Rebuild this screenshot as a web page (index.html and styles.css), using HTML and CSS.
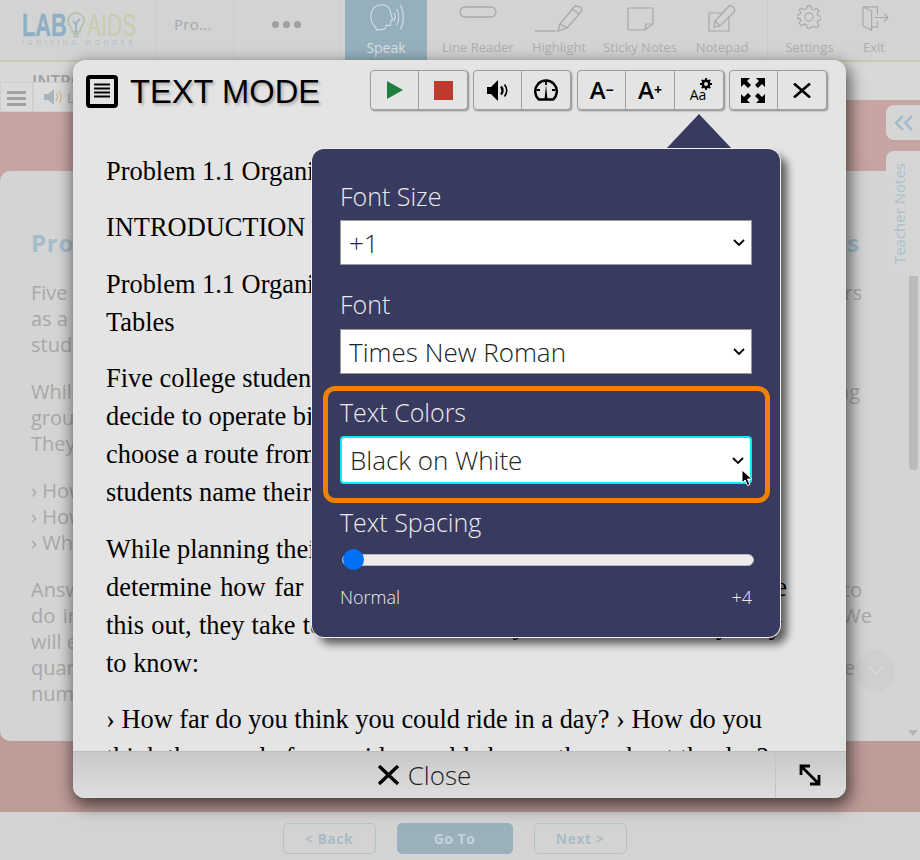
FILE: index.html
```html
<!DOCTYPE html>
<html lang="en">
<head>
<meta charset="utf-8">
<title>Text Mode</title>
<link rel="stylesheet" href="styles.css">
</head>
<body>
<div class="page">
  <header class="topbar">
    <div class="logo">
      <div class="logo-main"><span class="logo-lab">LAB</span>
        <svg class="logo-bulb" viewBox="0 0 18 28" width="18" height="28" fill="none"><path d="M9 1a8 8 0 0 0-8 8c0 4 3 5 4 9v2h8v-2c1-4 4-5 4-9a8 8 0 0 0-8-8z" stroke="#aebfa6" stroke-width="1.400"/><path d="M9 20V11l4-4M9 13L6 9" stroke="#9db7c6" stroke-width="2"/><path d="M6 22h6M6.500 24.500h5" stroke="#a9b9a4" stroke-width="1.500"/></svg>
        <span class="logo-aids">AIDS</span></div>
      <div class="logo-sub">IGNITING WONDER</div>
    </div>
    <div class="crumb">Pro...</div>
    <div class="dots"><i></i><i></i><i></i></div>
    <div class="tool tool-active">
      <svg viewBox="0 0 36 30" width="36" height="29" fill="none" stroke="#d5dfe3" stroke-width="1.100"><path d="M5 22C0 14 2 2 12 1c7-1 11 4 11 9 0 2 2 5 2 6l-2 1 0 4c0 2-3 1-5 1l-1 4-9 1c0-3-1-4-3-5z"/><path d="M26 9c2 3 2 6 0 9M29 5c3 5 3 12 0 17M33 1c4 8 4 18 0 25"/></svg>
      <span>Speak</span>
    </div>
    <div class="tool tool-line">
      <svg viewBox="0 0 38 12" width="38" height="12" fill="none" stroke="#a8a8a8" stroke-width="1.300"><rect x="1" y="1" width="36" height="10" rx="5"/></svg>
      <span>Line Reader</span>
    </div>
    <div class="tool tool-hl">
      <svg viewBox="0 0 48 27" width="48" height="27" fill="none" stroke="#a8a8a8" stroke-width="1.300"><path d="M0 26h21"/><path d="M23 26l2-7L39 2c2-2 4-1 6 0s2 3 1 5L32 23z"/><path d="M25 19l7 4M37 4l7 5"/></svg>
      <span>Highlight</span>
    </div>
    <div class="tool tool-sticky">
      <svg viewBox="0 0 27 24" width="27" height="24" fill="none" stroke="#a8a8a8" stroke-width="1.200"><path d="M1 1h25v16l-8 6H1z"/><path d="M18 23l1-6h7"/></svg>
      <span>Sticky Notes</span>
    </div>
    <div class="tool tool-note">
      <svg viewBox="0 0 28 27" width="28" height="27" fill="none" stroke="#a8a8a8" stroke-width="1.200"><path d="M21 11v15H1V8h15"/><path d="M6 22l1-6L21 1c1-1 3 0 5 2 1 2 1 3 0 4L12 21z"/><path d="M7 16l5 5"/></svg>
      <span>Notepad</span>
    </div>
    <div class="tool tool-set">
      <svg viewBox="0 0 26 26" width="24" height="24" fill="none" stroke="#a8a8a8" stroke-width="1.200"><circle cx="13" cy="13" r="4.500"/><path d="M11 1h4l.7 3.500 2.300 1 3-2 2.800 2.800-2 3 1 2.300 3.200.6v4l-3.200.7-1 2.300 2 3-2.800 2.800-3-2-2.300 1L15 25h-4l-.7-3.500-2.300-1-3 2L2.200 19.700l2-3-1-2.300L0 15v-4l3.200-.6 1-2.300-2-3L5 3.300l3 2 2.300-1z"/></svg>
      <span>Settings</span>
    </div>
    <div class="tool tool-exit">
      <svg viewBox="0 0 28 27" width="27" height="26" fill="none" stroke="#a8a8a8" stroke-width="1.200"><path d="M1 2v20l9 4V6L1 2h15v8M16 17v6h-6"/><path d="M13 13h14M23 9l4 4-4 4"/></svg>
      <span>Exit</span>
    </div>
  </header>
  <div class="greenline"></div>
  <div class="strip">
    <div class="strip-title">INTRODUCTION</div>
    <div class="mini-bar">
      <div class="mini-btn mini-menu"><i></i><i></i><i></i></div>
      <div class="mini-btn mini-listen">
        <svg viewBox="0 0 20 18" width="20" height="18"><path d="M1 6h4l6-5v16l-6-5H1z" fill="#aab4bc"/><path d="M13 5c2 2 2 6 0 8M16 3c3 3 3 9 0 12" stroke="#cdb68a" stroke-width="1.200" fill="none"/></svg>
        <span>Listen</span>
      </div>
    </div>
  </div>
  <main class="stage">
    <div class="side-tab side-collapse">
      <svg viewBox="0 0 20 16" width="20" height="16" fill="none" stroke="#a3bccb" stroke-width="2.500"><path d="M9 1L2 8l7 7M18 1l-7 7 7 7"/></svg>
    </div>
    <div class="side-tab side-notes"><span>Teacher Notes</span></div>
    <section class="card">
      <h1 class="card-title">Problem 1.1 Organizing Data in Tables</h1>
      <p class="bg-line e862">Five college students plan a summer biking trip and act as tour operators</p>
      <p class="bg-line">as a business. A bike shop lends them equipment for the long ride</p>
      <p class="bg-line">students will ride, and they make a plan.</p>
      <p class="bg-line bg-gap e860">While planning a trip, students ask how far they can ride in training</p>
      <p class="bg-line">group trials and long rides. They take notes on what they need.</p>
      <p class="bg-line">They collect their data.</p>
      <p class="bg-line bg-gap">› How far do you think you could ride in a day?</p>
      <p class="bg-line">› How do you think the speed of your ride would change?</p>
      <p class="bg-line">› What conditions would affect the distance you could ride?</p>
      <p class="bg-line bg-gap e862">Answer these questions by collecting data. In this unit, you learn how to</p>
      <p class="bg-line e872">do in a table and on a graph how one quantity changes with another one here too. We</p>
      <p class="bg-line">will explore how changes in one variable affect the other.</p>
      <p class="bg-line e855">quantities and how you can use patterns to describe a change over time</p>
      <p class="bg-line">numbers.</p>
      <div class="round-down"><svg viewBox="0 0 16 10" width="16" height="10" fill="none" stroke="#dadada" stroke-width="1.500"><path d="M1 1l7 7 7-7"/></svg></div>
    </section>
    <div class="scroller"></div>
    <svg class="scroll-down" viewBox="0 0 10 6" width="10" height="6"><path d="M0 0h10L5 6z" fill="#b4b4b4"/></svg>
  </main>
  <footer class="pager">
    <button class="pg-btn" type="button">&lt; Back</button>
    <button class="pg-btn pg-go" type="button">Go To</button>
    <button class="pg-btn" type="button">Next &gt;</button>
  </footer>
</div>

<div class="modal">
  <div class="modal-head">
    <svg class="doc-icon" viewBox="0 0 32 33" width="32" height="33" fill="none" stroke="#000"><rect x="2" y="2" width="28" height="29" rx="2" stroke-width="4"/><path d="M8 9.500h16M8 13.500h16M8 17.500h16M8 21.500h16" stroke-width="1.800"/></svg>
    <h2 class="modal-title">TEXT MODE</h2>
    <div class="btns">
      <div class="grp">
        <button class="b" type="button"><svg viewBox="0 0 16 18" width="16" height="18"><path d="M0 0l16 9-16 9z" fill="#1f7f3f"/></svg></button>
        <button class="b" type="button"><svg viewBox="0 0 19 19" width="19" height="19"><rect width="19" height="19" fill="#bf3a2e"/></svg></button>
      </div>
      <div class="grp">
        <button class="b" type="button"><svg viewBox="0 0 21 21" width="21" height="21"><path d="M0 7h4l7-7v21l-7-7H0z" fill="#000"/><path d="M14 6.500c2 2.500 2 5.500 0 8" stroke="#000" stroke-width="2.400" fill="none"/><path d="M17.500 4.500c3 4 3 8 0 12" stroke="#000" stroke-width="1.600" fill="none"/></svg></button>
        <button class="b" type="button"><svg viewBox="0 0 24 24" width="24" height="24" fill="none" stroke="#000"><path d="M5 21.500a10.800 10.800 0 1 1 14 0z" stroke-width="2.400"/><path d="M12 3v4M2.500 12h3.500M18 12h3.500" stroke-width="1.800"/><path d="M12 7l-1.500 14h3z" fill="#000" stroke="none"/></svg></button>
      </div>
      <div class="grp grp-font">
        <button class="b b-font" type="button">A<sup>−</sup></button>
        <button class="b b-font" type="button">A<sup>+</sup></button>
        <button class="b b-aa" type="button"><svg viewBox="0 0 12 12" width="12" height="12" class="gear"><circle cx="6" cy="6" r="3.200" fill="none" stroke="#000" stroke-width="2.600"/><path d="M6 0v2.500M6 9.500V12M0 6h2.500M9.500 6H12M1.800 1.800l1.700 1.700M8.500 8.500l1.700 1.700M10.200 1.800L8.500 3.500M3.500 8.500l-1.700 1.700" stroke="#000" stroke-width="1.800"/></svg><span>Aa</span></button>
      </div>
      <div class="grp">
        <button class="b" type="button"><svg viewBox="0 0 24 25" width="24" height="25"><path d="M0 0h9L6 3l4 4-3 3-4-4-3 3zM24 0v9l-3-3-4 4-3-3 4-4-3-3zM0 25v-9l3 3 4-4 3 3-4 4 3 3zM24 25h-9l3-3-4-4 3-3 4 4 3-3z" fill="#000"/></svg></button>
        <button class="b" type="button"><svg viewBox="0 0 18 15" width="18" height="15" fill="none" stroke="#000" stroke-width="2.600"><path d="M1 .5l16 14M17 .5L1 14.500"/></svg></button>
      </div>
    </div>
  </div>
  <div class="modal-body">
    <p>Problem 1.1 Organizing Data in Tables</p>
    <p>INTRODUCTION</p>
    <p>Problem 1.1 Organizing Data in Coordinate Graphs and<br>Tables</p>
    <p>Five college students spend their summer break and<br>decide to operate bicycle tours as a business. They<br>choose a route from Philadelphia to Williamsburg. The<br>students name their business Ocean and History Tours.</p>
    <p>While planning their tour, the students need to<span class="fit fit-e">determine how far they can ride each day on their route before</span><span class="fit fit-y">this out, they take to the road. Here is just about what they may</span>to know:</p>
    <p>› How far do you think you could ride in a day? › How do you<br>think the speed of your ride would change throughout the day?</p>
  </div>
  <div class="modal-foot">
    <button class="close" type="button"><svg viewBox="0 0 23 20" width="23" height="20" fill="none" stroke="#000" stroke-width="3.400"><path d="M2 1l19 18M21 1L2 19"/></svg><span>Close</span></button>
    <button class="resize" type="button"><svg viewBox="0 0 24 24" width="24" height="24" fill="none" stroke="#000" stroke-width="2.800"><path d="M3 3l18 18M3 12V3h9M21 12v9h-9"/></svg></button>
  </div>
</div>

<div class="pointer"></div>
<div class="popup">
  <label class="f-label">Font Size</label>
  <select class="f-select"><option>+1</option></select>
  <label class="f-label f-next">Font</label>
  <select class="f-select f-second"><option>Times New Roman</option></select>
  <div class="hilite">
    <label class="f-label">Text Colors</label>
    <select class="f-select f-focus"><option>Black on White</option></select>
  </div>
  <label class="f-label f-spacing">Text Spacing</label>
  <input class="slider" type="range" min="0" max="4" value="0">
  <div class="slider-ends"><span>Normal</span><span>+4</span></div>
  <svg class="cursor" viewBox="0 0 12 18" width="12" height="18"><path d="M1 1v13l3-3 2.500 5.500 2.500-1L6.500 10H11z" fill="#000" stroke="#fff" stroke-width="1"/></svg>
</div>
</body>
</html>
```
FILE: styles.css
```css
* { box-sizing: border-box; }
html, body { margin: 0; padding: 0; }
body { width: 920px; height: 860px; overflow: hidden; position: relative; background: #d3d3d3; font-family: "Open Sans", sans-serif; }
p, h1, h2 { margin: 0; }
button { font-family: inherit; padding: 0; }

.page { width: 920px; height: 860px; display: flex; flex-direction: column; }

.topbar { height: 60px; flex: none; display: flex; background: #d3d3d3; color: #a9a9a9; }
.logo { width: 157px; padding: 12px 0 0 22px; border-right: 1px solid #cbcbcb; flex: none; }
.logo-main { display: flex; align-items: flex-start; height: 28px; }
.logo-lab { display: block; width: 45px; font: bold 32px/26px "Liberation Sans", sans-serif; color: #8fb0c4; transform: scaleX(.68); transform-origin: left top; white-space: nowrap; -webkit-text-stroke: .4px #8fb0c4; }
.logo-aids { display: block; width: 48px; margin-left: 2px; font: 32px/26px "Liberation Sans", sans-serif; color: #c6ccad; transform: scaleX(.66); transform-origin: left top; white-space: nowrap; }
.logo-bulb { flex: none; }
.logo-sub { font: 7px/7px "Open Sans", sans-serif; letter-spacing: 3.400px; color: #a9bcc7; margin-top: -1px; white-space: nowrap; }
.crumb { width: 77px; flex: none; border-right: 1px solid #cbcbcb; padding: 13px 0 0 17px; font-size: 15px; line-height: 22px; letter-spacing: .3px; color: #a4a7ab; }
.dots { width: 106px; flex: none; display: flex; gap: 4px; justify-content: center; padding-top: 21px; border-right: 1px solid #cbcbcb; }
.dots i { width: 7px; height: 7px; border-radius: 50%; background: #a0a0a0; }
.tool { flex: none; display: flex; flex-direction: column; align-items: center; justify-content: flex-end; padding-bottom: 4px; font-size: 13px; line-height: 17px; color: #aeaeae; position: relative; }
.tool svg { position: absolute; }
.tool-active { width: 82px; margin-left: 5px; background: #95afbd; color: #d8e0e4; font-size: 14px; }
.tool-active svg { top: 4px; left: 23px; }
.tool-line { width: 102px; }
.tool-line svg { top: 6px; left: 32px; }
.tool-hl { width: 60px; }
.tool-hl svg { top: 5px; left: 6px; }
.tool-sticky { width: 102px; }
.tool-sticky svg { top: 7px; left: 38px; }
.tool-note { width: 62px; margin-right: 14px; }
.tool-note svg { top: 5px; left: 17px; }
.tool-set { width: 84px; border-left: 1px solid #cbcbcb; }
.tool-set svg { top: 5px; left: 29px; }
.tool-exit { width: 46px; }
.tool-exit svg { top: 5px; left: 11px; }

.greenline { height: 2px; flex: none; background: #c3cbb0; }

.strip { height: 38px; flex: none; background: #d8d8d8; position: relative; }
.strip-title { font-size: 17px; line-height: 22px; font-weight: 600; color: #a0a0a0; padding: 8px 0 0 32px; height: 20px; overflow: hidden; white-space: nowrap; }
.mini-bar { position: absolute; left: 0; top: 20px; height: 30px; display: flex; z-index: 1; }
.mini-btn { height: 30px; background: #dbdbdb; border: 1px solid #cfcfcf; }
.mini-menu { width: 33px; display: flex; flex-direction: column; gap: 3px; padding: 8px 6px 0; }
.mini-menu i { height: 3px; background: #a2a2a2; }
.mini-listen { width: 70px; display: flex; align-items: center; gap: 4px; padding-left: 9px; font-size: 14px; color: #a8a8a8; }
.mini-listen svg { flex: none; }

.stage { flex: 1; background: linear-gradient(#c8a5a2, #bd9b97); padding-top: 71px; display: flex; flex-direction: column; position: relative; }
.side-tab { position: absolute; left: 886px; width: 34px; background: #d5d5d5; border-radius: 8px 0 0 8px; }
.side-collapse { top: 5px; height: 35px; display: flex; align-items: center; padding-left: 8px; }
.side-notes { top: 51px; height: 125px; display: flex; align-items: center; justify-content: center; padding-right: 8px; z-index: 2; }
.side-notes span { writing-mode: vertical-rl; transform: rotate(180deg); font-size: 15px; color: #a9c0cd; white-space: nowrap; }
.card { width: 920px; height: 570px; background: #d4d4d4; border-radius: 10px 0 0 10px; padding: 55px 0 0 31px; position: relative; }
.card-title { width: 829px; font-size: 24px; line-height: 34px; font-weight: 700; color: #a3bccb; letter-spacing: .75px; margin-bottom: 20px; white-space: nowrap; text-align-last: justify; }
.bg-line { font-size: 20px; line-height: 26px; color: #a8a8a8; white-space: nowrap; }
.bg-gap { margin-top: 21px; }
.e862 { width: 831px; text-align-last: justify; }
.e860 { width: 829px; text-align-last: justify; }
.e872 { width: 841px; text-align-last: justify; }
.e855 { width: 824px; text-align-last: justify; }
.round-down { position: absolute; left: 856px; top: 479px; width: 39px; height: 42px; border-radius: 50%; background: #cfcfcf; display: flex; align-items: center; justify-content: center; }
.scroller { position: absolute; left: 909px; top: 176px; width: 9px; height: 194px; background: #bbb; border-radius: 0 0 4px 4px; }
.scroll-down { position: absolute; left: 908px; top: 630px; }

.pager { height: 48px; flex: none; background: #d3d3d3; display: flex; justify-content: center; gap: 21px; padding: 11px 11px 6px 0; }
.pg-btn { width: 93px; height: 31px; border: 1px solid #b4c3ca; border-radius: 5px; background: transparent; font-size: 14px; font-weight: 700; color: #a9bcc6; letter-spacing: .5px; }
.pg-go { width: 116px; background: #9ab0ba; border-color: #9ab0ba; color: #c5d2d8; }

.modal { position: absolute; left: 73px; top: 60px; width: 773px; height: 738px; background: #e4e4e4; border-radius: 12px; box-shadow: 2px 6px 16px 2px rgba(0,0,0,.6); display: flex; flex-direction: column; overflow: hidden; z-index: 5; }
.modal-head { height: 62px; flex: none; display: flex; align-items: flex-start; padding: 10px 0 0 13px; }
.doc-icon { margin: 5px 12px 0 0; flex: none; }
.modal-title { font: 400 32.7px/44px "Liberation Sans", sans-serif; color: #000; text-shadow: 2px 2px 3px #aaa; white-space: nowrap; width: 240px; }
.btns { display: flex; gap: 5px; }
.grp { display: flex; height: 40px; background: #e4e4e4; border: 1px solid #a0a0a0; border-radius: 4px; box-shadow: 1px 1px 2px rgba(0,0,0,.4); }
.grp-font { margin-left: 1px; }
.b { width: 48px; height: 38px; border: 0; border-right: 1px solid #a0a0a0; background: transparent; display: flex; align-items: center; justify-content: center; color: #000; position: relative; }
.b:last-child { border-right: 0; }
.b-font, .b-aa { width: 48.33px; }
.b-font { font: 600 24px/38px "Open Sans", sans-serif; }
.b-font sup { font-size: 14px; line-height: 14px; font-weight: 700; vertical-align: 3px; }
.b-aa span { position: absolute; left: 15px; top: 15px; font-size: 14px; line-height: 18px; font-weight: 400; }
.gear { position: absolute; left: 25px; top: 7px; }

.modal-body { flex: 1; min-height: 0; overflow: hidden; padding: 30px 0 0 33px; font: 26.4px/38px "Liberation Serif", serif; color: #000; white-space: nowrap; }
.modal-body p { margin-bottom: 18.4px; }
.fit { display: block; text-align-last: justify; }
.fit-e { width: 681px; }
.fit-y { width: 676px; }
.modal-foot { height: 47px; flex: none; display: flex; background: linear-gradient(#c9c9c9, #dedede); border-top: 1px solid #bdbdbd; }
.close { flex: 1; border: 0; background: transparent; display: flex; align-items: center; justify-content: center; gap: 8px; font-size: 26px; font-weight: 300; color: #222; }
.resize { width: 71px; flex: none; border: 0; border-left: 1px solid #c4c4c4; background: transparent; display: flex; align-items: center; justify-content: center; padding-right: 3px; }

.pointer { position: absolute; left: 665px; top: 114px; width: 68px; height: 36px; background: #383a60; clip-path: polygon(50% 0, 100% 100%, 0 100%); z-index: 6; }
.popup { position: absolute; left: 312px; top: 149px; width: 468px; height: 488px; background: #383a60; border-radius: 12px; box-shadow: 0 0 0 1px #f0f0f0, 7px 7px 8px rgba(0,0,0,.6); padding: 31px 28px 0; display: flex; flex-direction: column; z-index: 7; }
.f-label { display: block; height: 34px; font-size: 25px; line-height: 32px; font-weight: 300; color: #ececec; }
.f-select { -webkit-appearance: none; appearance: none; display: block; width: 100%; height: 45px; margin-top: 6px; color: #222; border: 1px solid #999; border-radius: 0; padding: 0 8px; font: 300 26px/40px "Open Sans", sans-serif; background: #fff url("data:image/svg+xml,%3Csvg xmlns='http://www.w3.org/2000/svg' width='12' height='7'%3E%3Cpath d='M1 1l5 5 5-5' fill='none' stroke='%23000' stroke-width='1.800'/%3E%3C/svg%3E") no-repeat right 6px center; }
.f-next { margin-top: 23px; }
.f-second { margin-top: 7px; }
.hilite { width: 447px; height: 117px; margin: 12px 0 0 -17px; padding: 5px 0 0 12px; border: 5px solid #ee8100; border-radius: 12px; flex: none; }
.hilite .f-select { width: 412px; }
.f-focus { height: 48px; border: 2px solid #00efff; border-radius: 4px; margin-top: 6px; }
.f-spacing { margin-top: 3px; }
.slider { -webkit-appearance: none; appearance: none; display: block; width: 412px; height: 21px; margin: 9px 0 0 2px; background: transparent; }
.slider::-webkit-slider-runnable-track { height: 12px; background: #ececec; border-radius: 6px; border: 1px solid #b5b5b5; }
.slider::-webkit-slider-thumb { -webkit-appearance: none; width: 21px; height: 21px; margin-top: -5.500px; border-radius: 50%; background: #0070f5; }
.slider-ends { display: flex; justify-content: space-between; width: 412px; margin-top: 15px; font-size: 18px; line-height: 24px; font-weight: 300; color: #ececec; }
.cursor { position: absolute; left: 429px; top: 320px; }
```
